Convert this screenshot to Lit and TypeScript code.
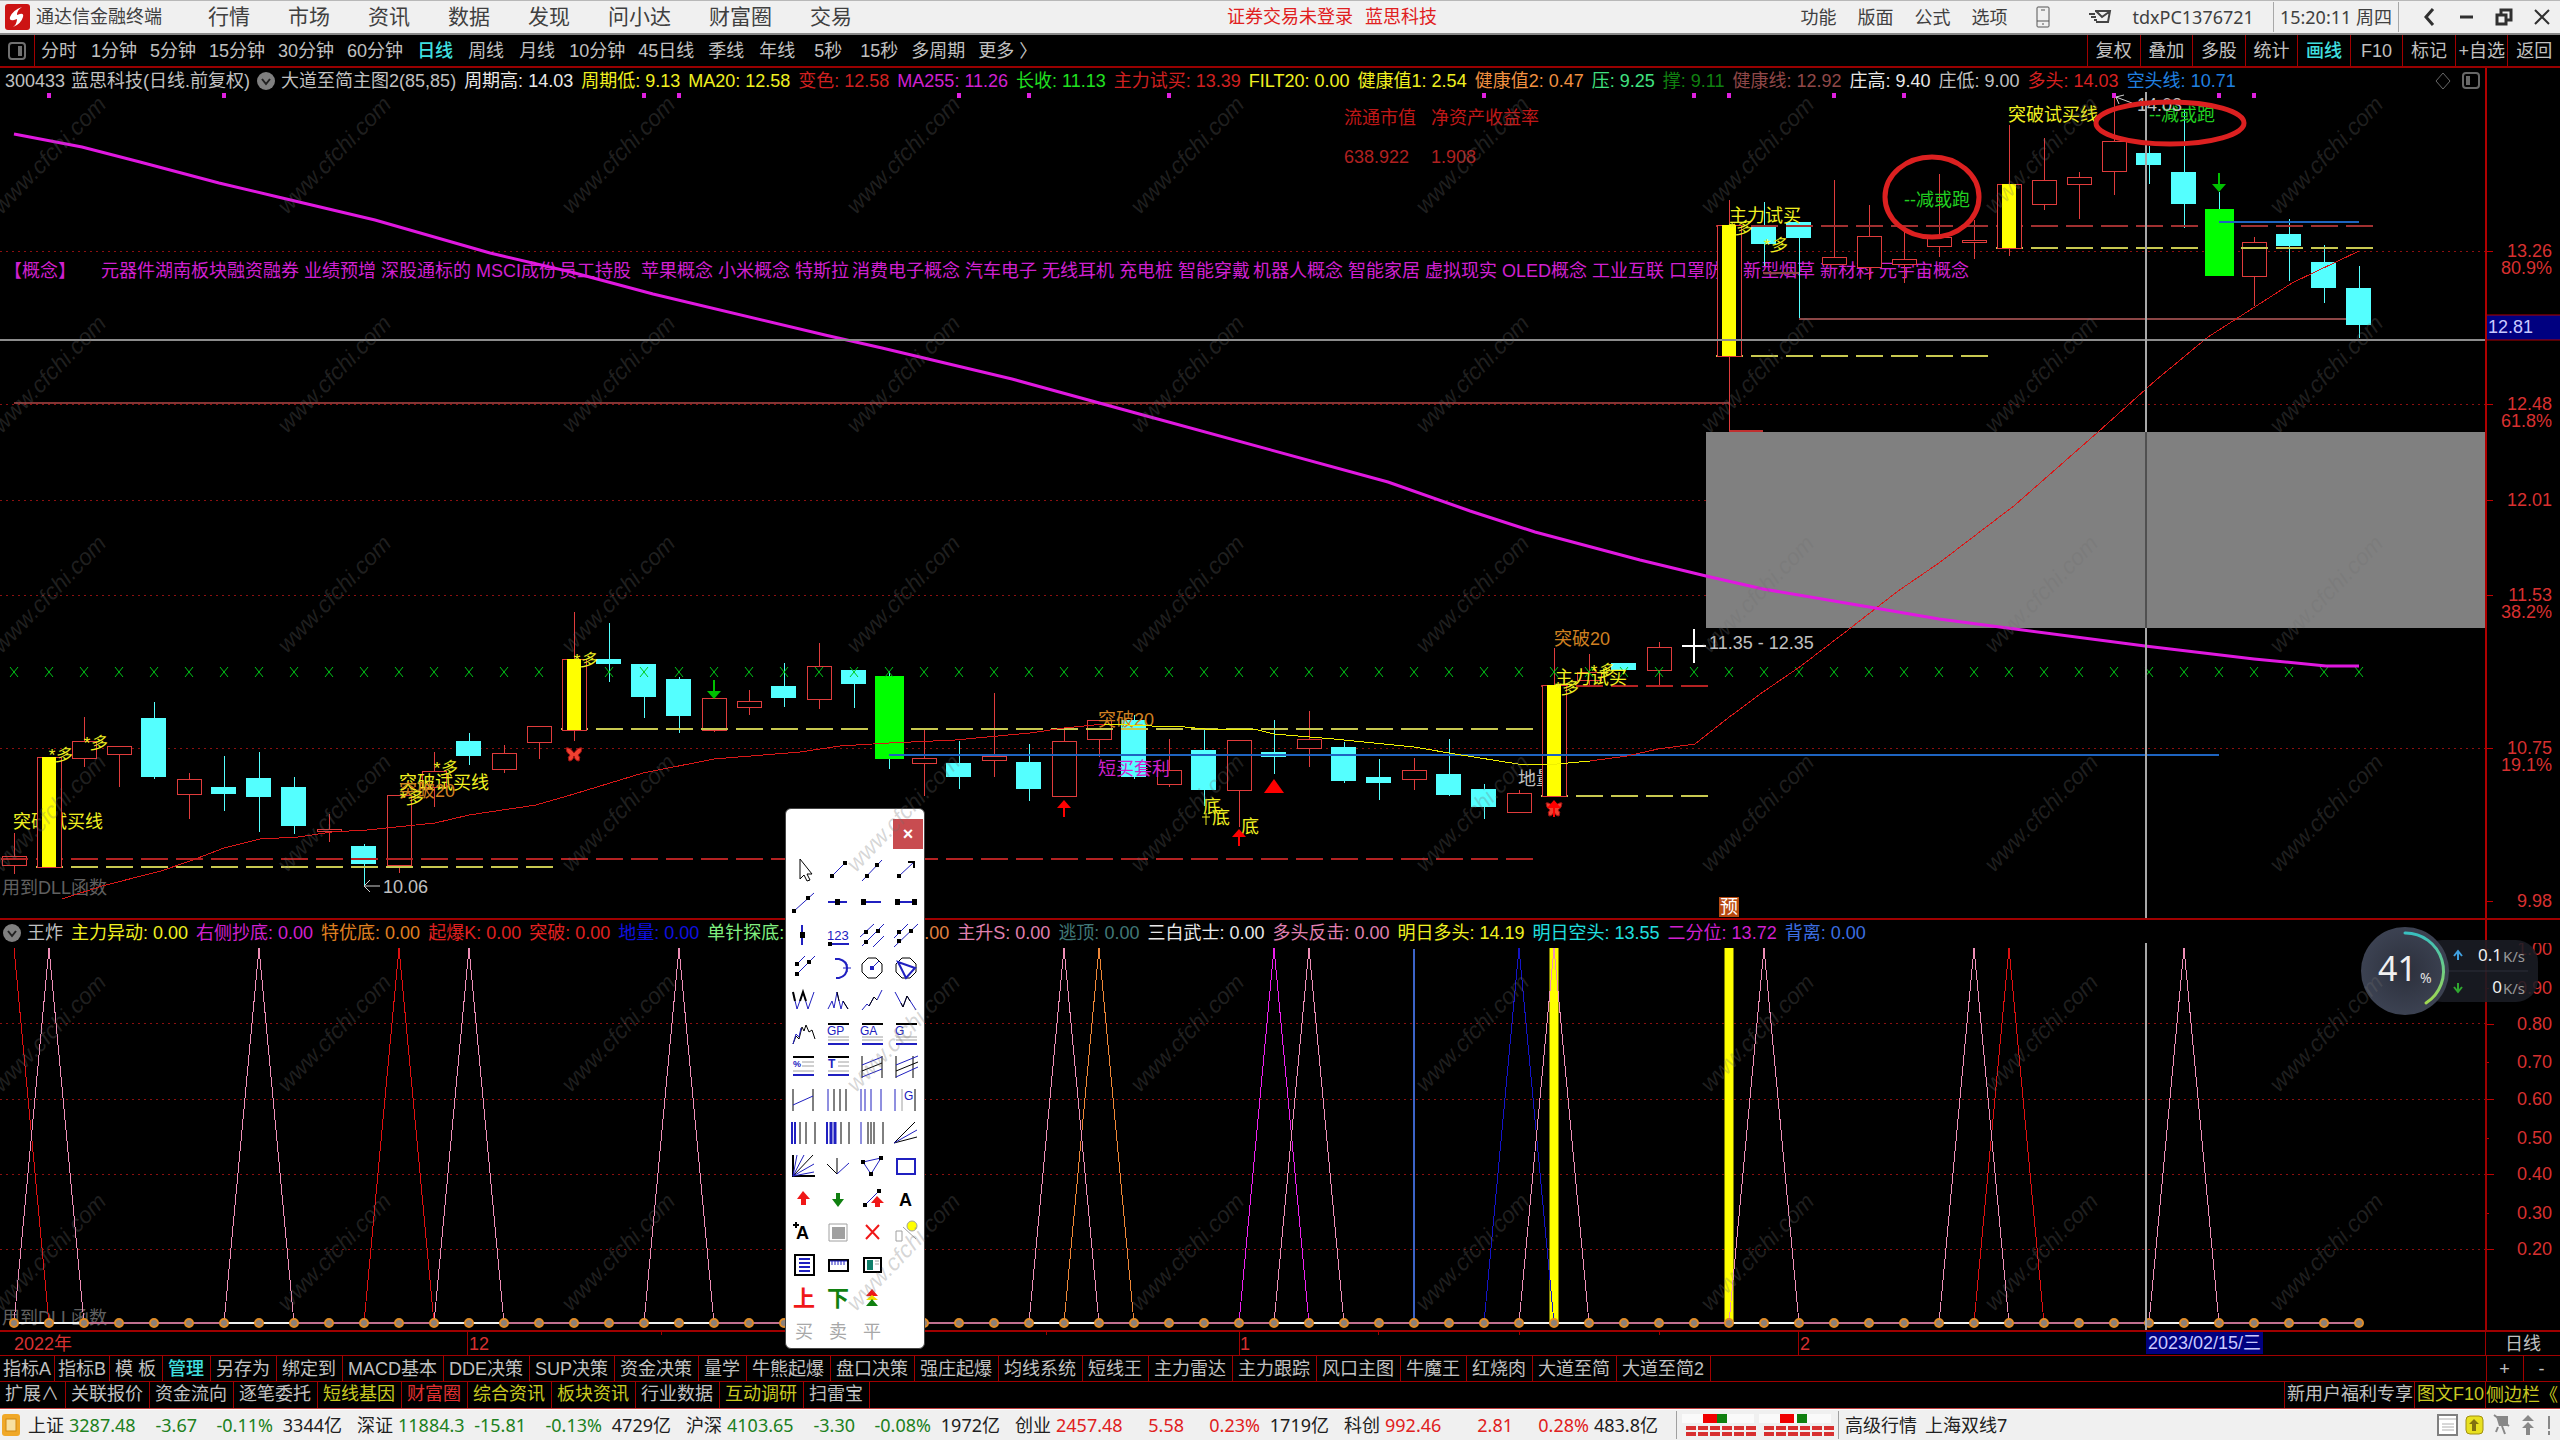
import { LitElement, html, svg, css } from "lit";
import { customElement, property } from "lit/decorators.js";

type Pt = [number, number];
type Item = { text: string; color: string };

const STEP = 35;
const bx = (i: number) => 14 + STEP * i;
const pts = (list: Pt[]) => list.map((p) => p.join(",")).join(" ");

/* index, kind (r hollow red, c cyan, y yellow, g green), high, top, bottom, low */
const CANDLES: [number, string, number, number, number, number][] = [
  [0, "r", 833, 856, 865, 874], [1, "y", 757, 757, 867, 867], [2, "r", 717, 741, 758, 767],
  [3, "r", 746, 746, 754, 787], [4, "c", 702, 718, 777, 779], [5, "r", 773, 779, 794, 819],
  [6, "c", 756, 787, 794, 811], [7, "c", 752, 778, 797, 832], [8, "c", 777, 787, 826, 834],
  [9, "r", 814, 829, 831, 842], [10, "c", 844, 846, 864, 885], [11, "r", 795, 795, 865, 873],
  [12, "r", 752, 771, 787, 807], [13, "c", 733, 741, 756, 765], [14, "r", 745, 753, 769, 773],
  [15, "r", 726, 726, 742, 759], [16, "y", 612, 659, 730, 741], [17, "c", 623, 659, 664, 682],
  [18, "c", 664, 664, 697, 718], [19, "c", 677, 679, 716, 733], [20, "r", 698, 698, 730, 732],
  [21, "r", 690, 701, 707, 715], [22, "c", 663, 686, 698, 707], [23, "r", 643, 666, 699, 709],
  [24, "c", 670, 670, 684, 708], [25, "g", 671, 676, 759, 769], [26, "r", 730, 758, 763, 796],
  [27, "c", 741, 763, 777, 789], [28, "r", 693, 756, 760, 777], [29, "c", 744, 762, 789, 801],
  [30, "r", 729, 741, 796, 796], [31, "r", 720, 720, 739, 757], [32, "c", 715, 720, 777, 779],
  [33, "r", 739, 770, 784, 787], [34, "c", 730, 750, 790, 806], [35, "r", 740, 740, 790, 827],
  [36, "c", 720, 752, 757, 774], [37, "r", 711, 739, 748, 767], [38, "c", 742, 747, 781, 783],
  [39, "c", 759, 777, 783, 800], [40, "r", 758, 770, 779, 790], [41, "c", 739, 774, 795, 796],
  [42, "c", 784, 789, 807, 819], [43, "r", 790, 793, 812, 812], [44, "y", 648, 685, 796, 796],
  [45, "r", 654, 672, 680, 686], [46, "c", 663, 663, 670, 673], [47, "r", 642, 647, 670, 686],
  [49, "y", 200, 225, 356, 431], [50, "c", 202, 226, 244, 266], [51, "c", 222, 222, 238, 318],
  [52, "r", 180, 257, 264, 264], [53, "r", 205, 236, 267, 280], [54, "r", 232, 259, 264, 283],
  [55, "r", 174, 237, 246, 257], [56, "r", 220, 240, 242, 259], [57, "y", 125, 184, 248, 256],
  [58, "r", 138, 180, 204, 210], [59, "r", 172, 177, 184, 219], [60, "r", 97, 141, 171, 195],
  [61, "c", 146, 153, 165, 184], [62, "c", 110, 172, 204, 228], [63, "g", 192, 209, 276, 276],
  [64, "r", 237, 242, 276, 306], [65, "c", 219, 234, 246, 281], [66, "c", 245, 262, 288, 303],
  [67, "c", 266, 288, 325, 338],
];

const MA_LONG: Pt[] = [
  [14, 134], [82, 147], [140, 162], [219, 183], [278, 197], [375, 220], [490, 253], [571, 272], [653, 294],
  [825, 335], [882, 348], [1012, 379], [1143, 415], [1388, 482], [1470, 511], [1535, 532], [1640, 560], [1706, 576], [1763, 589],
  [1875, 608], [1939, 619], [2015, 629], [2145, 646], [2254, 659], [2326, 666], [2359, 666],
];
const MA_RED_A: Pt[] = [
  [62, 899], [102, 886], [161, 871], [190, 861], [224, 848], [260, 839], [298, 837], [332, 832], [367, 830],
  [435, 823], [469, 815], [536, 805], [574, 794], [643, 773], [714, 759], [800, 752], [840, 746], [889, 743],
  [955, 740], [1030, 733], [1064, 728], [1104, 724],
];
const MA_YELLOW: Pt[] = [
  [1104, 724], [1152, 726], [1185, 727], [1205, 729], [1254, 729], [1274, 734], [1334, 739], [1414, 747],
  [1455, 754], [1518, 764], [1546, 765], [1590, 761],
];
const MA_RED_B: Pt[] = [
  [1590, 761], [1627, 756], [1658, 749], [1695, 744], [1728, 718], [1763, 692], [1801, 666], [1848, 630],
  [1898, 591], [1939, 563], [2015, 505], [2098, 432], [2156, 380], [2208, 337], [2292, 283], [2359, 251],
];

/* colour, y, first bar, last bar */
const STICKS: [string, number, number, number][] = [
  ["#c8c850", 867, 1, 15], ["#c8c850", 729, 16, 43], ["#c8c850", 796, 44, 48],
  ["#c8c850", 356, 49, 56], ["#c8c850", 248, 57, 67],
  ["#b42222", 859, 0, 43], ["#b42222", 686, 44, 48], ["#a03030", 226, 49, 67],
];

const PRICE_LABELS: [number, string, string?][] = [
  [251, "13.26", "80.9%"], [404, "12.48", "61.8%"], [500, "12.01"], [595, "11.53", "38.2%"],
  [748, "10.75", "19.1%"], [901, "9.98"],
];

const DOTS = [1, 6, 18, 19, 27, 29, 33, 42, 48, 49, 52, 54, 60, 63, 64];

const YEL = "#f0f020";
const NOTES: [number, number, string, string][] = [
  [13, 822, "突破试买线", YEL], [399, 783, "突破试买线", YEL], [399, 791, "突破20", "#d08020"],
  [1098, 720, "突破20", "#d08020"], [1554, 639, "突破20", "#d08020"], [1098, 769, "短买套利", "#d020d0"],
  [1203, 807, "底", YEL], [1212, 818, "底", YEL], [1241, 827, "底", YEL], [1518, 779, "地量", "#c0c0c0"],
];
const TOP_NOTES: [number, number, string, string][] = [
  [1555, 678, "主力试买", YEL], [1729, 216, "主力试买", YEL], [2008, 115, "突破试买线", YEL],
  [1904, 200, "--减或跑", "#20d020"], [2149, 115, "--减或跑", "#20d020"],
  [383, 887, "10.06", "#c0c0c0"], [1709, 643, "11.35 - 12.35", "#c0c0c0"],
  [1344, 118, "流通市值", "#c01818"], [1431, 118, "净资产收益率", "#c01818"],
  [1344, 157, "638.922", "#b02020"], [1431, 157, "1.908", "#b02020"],
];
const MANY: Pt[] = [[48, 755], [83, 743], [399, 798], [433, 768], [573, 660], [1554, 688], [1590, 671], [1728, 228], [1763, 245]];

const CONCEPTS: [number, string][] = [
  [4, "【概念】"],
  [101, "元器件湖南板块融资融券 业绩预增 深股通标的 MSCI成份"],
  [559, "员工持股"],
  [641, "苹果概念 小米概念 特斯拉"],
  [852, "消费电子概念 汽车电子 无线耳机 充电桩 智能穿戴"],
  [1253, "机器人概念 智能家居 虚拟现实"],
  [1502, "OLED概念 工业互联 口罩防护"],
  [1743, "新型烟草 新材料 元宇宙概念"],
];

@customElement("price-chart")
export class PriceChart extends LitElement {
  static styles = css`
    :host { display: block; }
    .plot { display: block; width: 100%; height: auto; font: 18px "Liberation Sans", "Noto Sans CJK SC", sans-serif; }
    .mid { dominant-baseline: central; }
    .many { font-size: 17px; font-style: italic; }
  `;

  private candle([i, kind, high, top, bottom, low]: (typeof CANDLES)[number]) {
    const x = bx(i);
    const cyan = kind === "c" || kind === "g";
    const line = cyan ? "#54ffff" : "#e03c3c";
    const wick = svg`<path d="M${x} ${high}V${top}M${x} ${bottom}V${low}" stroke=${line} stroke-width="1" />`;
    if (kind === "c") return svg`${wick}<rect x=${x - 13} y=${top} width="25" height=${bottom - top} fill="#54ffff" />`;
    if (kind === "g") return svg`${wick}<rect x=${x - 14} y=${top} width="29" height=${bottom - top} fill="#00ff00" />`;
    const box = svg`<rect x=${x - 12} y=${top} width="24" height=${bottom - top} fill="#000" stroke="#e03c3c" />`;
    if (kind === "r") return svg`${wick}${box}`;
    return svg`${wick}${box}<rect x=${x - 7} y=${top} width="14" height=${bottom - top} fill="#ff0" />`;
  }

  private upArrow(x: number, y: number) {
    return svg`<path d="M${x} ${y}l7 8h-6v9h-2v-9h-6z" fill="#f00" />`;
  }

  private downArrow(x: number, y: number) {
    return svg`<path d="M${x} ${y + 19}l7 -8h-6v-11h-2v11h-6z" fill="#00c000" />`;
  }

  private butterfly(x: number, y: number) {
    return svg`<path d="M${x} ${y}q-4 -6 -8 -5q0 5 4 7q-3 2 -1 6q4 0 5 -5q1 5 5 5q2 -4 -1 -6q4 -2 4 -7q-4 -1 -8 5z"
      fill="#f04030" stroke="#a01010" />`;
  }

  render() {
    const xs = Array.from({ length: 68 }, (_, i) => i).filter((i) => i !== 16);
    return html`<svg class="plot" viewBox="0 92 2560 826" role="img" aria-label="日线">
      <g shape-rendering="crispEdges">
        ${PRICE_LABELS.map(([y]) => svg`
          ${y < 900 ? svg`<line x1="0" y1=${y} x2="2485" y2=${y} stroke="#8c1010" stroke-dasharray="2 4" />` : ""}
          <line x1="2485" y1=${y} x2="2493" y2=${y} stroke="#c00000" />`)}
      </g>
      <text x="2" y="888" class="mid" fill="#606060">用到DLL函数</text>
      ${CONCEPTS.map(([x, t]) => svg`<text x=${x} y="271" class="mid" fill="#d020d0">${t}</text>`)}
      <g shape-rendering="crispEdges" fill="none">
        <path d="M14 403H1729" stroke="#843434" stroke-width="2" />
        <path d="M1763 273H1799M1799 319H2359" stroke="#8c4646" stroke-width="2" />
        <path d="M1729 431H1763" stroke="#c03030" stroke-width="2" />
      </g>
      <rect x="1706" y="432" width="779" height="196" fill="#808080" />
      <g shape-rendering="crispEdges">
        ${CANDLES.filter((c) => c[1] === "r" || c[1] === "c").map((c) => this.candle(c))}
      </g>
      ${NOTES.map(([x, y, t, c]) => svg`<text x=${x} y=${y} class="mid" fill=${c}>${t}</text>`)}
      <g shape-rendering="crispEdges">
        ${STICKS.map(([c, y, a, b]) => svg`<line x1=${bx(a) - 13} y1=${y} x2=${bx(b) + 14} y2=${y} stroke=${c} stroke-width="2" stroke-dasharray="27 8" />`)}
        ${CANDLES.filter((c) => c[1] === "y" || c[1] === "g").map((c) => this.candle(c))}
      </g>
      <path d="M889 755H2219M2219 222H2359" stroke="#1e64c0" stroke-width="2" />
      <g stroke="#00c818">
        ${xs.map((i) => svg`<path d="M${bx(i) - 4} 667l8 10m0 -10l-8 10" />`)}
      </g>
      <g fill="none">
        <g shape-rendering="crispEdges">
          <polyline points=${pts(MA_RED_A)} stroke="#d81818" />
          <polyline points=${pts(MA_YELLOW)} stroke="#f0f000" />
          <polyline points=${pts(MA_RED_B)} stroke="#d81818" />
        </g>
        <polyline points=${pts(MA_LONG)} stroke="#e018e0" stroke-width="3" />
      </g>
      ${DOTS.map((i) => svg`<rect x=${bx(i) - 2} y="93" width="4" height="5" fill="#e020e0" />`)}
      ${MANY.map(([x, y]) => svg`<text x=${x} y=${y} class="mid many" fill=${YEL}>*多</text>`)}
      ${TOP_NOTES.map(([x, y, t, c]) => svg`<text x=${x} y=${y} class="mid" fill=${c}>${t}</text>`)}
      <text x="2137" y="105" class="mid" fill="#c0c0c0">14.03</text>
      <path d="M364 886h16m-16 0l6 -6m-6 6l6 6M2116 97l16 6m-16 -6l8 -2m-8 2l3 7" stroke="#d0d0d0" fill="none" />
      ${this.butterfly(574, 753)}${this.butterfly(1554, 808)}
      ${this.upArrow(1064, 800)}${this.upArrow(1239, 829)}${this.upArrow(1554, 800)}
      <path d="M1274 779l10 14h-20z" fill="#f00" />
      ${this.downArrow(714, 680)}${this.downArrow(2219, 173)}
      <path d="M1206 813v12m-4 -8h8" stroke=${YEL} />
      <path d="M1682 646h24M1694 629v34" stroke="#fff" stroke-width="2" shape-rendering="crispEdges" />
      <rect x="1719" y="897" width="20" height="20" fill="#b84a10" />
      <text x="1720" y="907" class="mid" fill="#fff">预</text>
      <g shape-rendering="crispEdges">
        <rect x="0" y="339" width="2485" height="2" fill="#8c8c8c" />
        <path d="M2146 92V432M2146 628V918" stroke="#a8a8a8" stroke-width="2" />
        <path d="M2146 432V628" stroke="#505050" stroke-width="2" />
        <path d="M2486 92V918" stroke="#b00000" stroke-width="2" />
      </g>
      <ellipse cx="1932" cy="197" rx="47" ry="40" fill="none" stroke="#dc2020" stroke-width="5" />
      <ellipse cx="2170" cy="123" rx="74" ry="21" fill="none" stroke="#dc2020" stroke-width="5" />
      <g text-anchor="end" fill="#d83030">
        ${PRICE_LABELS.map(([y, p, pc]) => svg`
          <text x="2552" y=${y} class="mid">${p}</text>
          ${pc ? svg`<text x="2552" y=${y + 17} class="mid">${pc}</text>` : ""}`)}
      </g>
      <rect x="2487" y="315" width="73" height="25" fill="#000080" />
      <path d="M2487 315h73M2487 340h73" stroke="#b00000" />
      <text x="2488" y="327" class="mid" fill="#c8c8ff">12.81</text>
    </svg>`;
  }
}

const PINK = "#f090b8";
const PEAKS: [number, string][] = [
  [11, "#e01010"], [43, "#1414c8"], [31, "#f08838"], [36, "#f020f0"], [57, "#e01010"],
  [1, PINK], [7, PINK], [13, PINK], [19, PINK], [30, PINK], [37, PINK], [44, PINK], [50, PINK], [56, PINK], [62, PINK],
];

@customElement("signal-chart")
export class SignalChart extends LitElement {
  static styles = css`
    :host { display: block; }
    .plot { display: block; width: 100%; height: auto; font: 18px "Liberation Sans", "Noto Sans CJK SC", sans-serif; }
    .mid { dominant-baseline: central; }
  `;

  render() {
    const levels: [number, string][] = [
      [949, "1.00"], [988, "0.90"], [1024, "0.80"], [1062, "0.70"], [1099, "0.60"],
      [1138, "0.50"], [1174, "0.40"], [1213, "0.30"], [1249, "0.20"],
    ];
    const grid = [1023, 1099, 1174, 1249];
    const all = Array.from({ length: 68 }, (_, i) => i);
    return html`<svg class="plot" viewBox="0 943 2560 412" role="img" aria-label="王炸">
      <g shape-rendering="crispEdges">
        ${grid.map((y) => svg`<line x1="0" y1=${y} x2="2485" y2=${y} stroke="#8c1010" stroke-dasharray="2 4" />`)}
        ${levels.map(([y]) => svg`<line x1="2486" y1=${y} x2=${grid.some((g) => Math.abs(g - y) < 2) ? 2494 : 2489} y2=${y} stroke="#c00000" />`)}
      </g>
      <text x="2" y="1318" class="mid" fill="#606060">用到DLL函数</text>
      <path d="M1414 949V1323" stroke="#3c64c8" stroke-width="2" />
      <path d="M1554 948V1323M1729 948V1323" stroke="#ff0" stroke-width="9" />
      <g fill="none" shape-rendering="crispEdges">
        <polyline points="14,948 49,1323" stroke="#e01010" />
        ${PEAKS.map(([i, c]) => svg`<polyline points=${pts([[bx(i - 1), 1323], [bx(i), 948], [bx(i + 1), 1323]])} stroke=${c} />`)}
      </g>
      <g shape-rendering="crispEdges">
        <line x1="14" y1="1323" x2="2359" y2="1323" stroke="#c07090" stroke-width="2" />
        ${PEAKS.filter((p) => p[1] === PINK).map(([i]) => svg`<line x1=${bx(i - 1)} y1="1323" x2=${bx(i + 1)} y2="1323" stroke="#f0f0f0" stroke-width="2" />`)}
      </g>
      ${all.map((i) => svg`<circle cx=${bx(i)} cy="1323" r="4" fill="#8c8078" stroke="#e08c28" stroke-width="2" />`)}
      <g shape-rendering="crispEdges" stroke="#a00000">
        <path d="M2146 943V1331" stroke="#a8a8a8" stroke-width="2" />
        <path d="M2486 943V1331M0 1331H2560" stroke-width="2" />
        <path d="M2485 1331V1355M467 1331V1355M1239 1331V1355M1798 1331V1355M661 1331v4M1046 1331v4M1378 1331v4M1519 1331v4M1659 1331v4" />
      </g>
      <rect x="2146" y="1332" width="117" height="22" fill="#000080" />
      <g fill="#d83030">
        <text x="14" y="1344" class="mid">2022年</text>
        <text x="469" y="1344" class="mid">12</text>
        <text x="1240" y="1344" class="mid">1</text>
        <text x="1800" y="1344" class="mid">2</text>
        <g text-anchor="end">${levels.map(([y, t]) => svg`<text x="2552" y=${y} class="mid">${t}</text>`)}</g>
      </g>
      <text x="2148" y="1343" class="mid" fill="#c8c8ff">2023/02/15/三</text>
      <text x="2505" y="1344" class="mid" fill="#c0c0c0">日线</text>
    </svg>`;
  }
}

const K = "#000";
const B = "#2020c0";
const G = "#a0a0a0";
const ln = (d: string, c = B, w = 1) => svg`<path d=${d} stroke=${c} stroke-width=${w} fill="none" />`;
const sq = (...list: Pt[]) => list.map(([x, y]) => svg`<rect x=${x - 2} y=${y - 2} width="4" height="4" fill="#000" />`);
const tx = (t: string, x: number, y: number, size: number, c: string, bold = false) =>
  svg`<text x=${x} y=${y} font-size=${size} font-weight=${bold ? 700 : 400} fill=${c}>${t}</text>`;
const OCT = "M8 2h8l6 6v8l-6 6h-8l-6 -6v-8z";
const lines = (t: string, x: number) =>
  svg`${ln("M2 2H23", K, 2)}${tx(t, x, 13, 12, B)}${ln("M2 15H23M2 18H23", G)}${ln("M2 22H23", B, 2)}`;

const TOOLS = [
  ["选择", svg`<path d="M8 2V22l4 -4l3 6l3 -1l-3 -6h5z" fill="#fff" stroke="#000" stroke-width="1" />`],
  ["线段", svg`${ln("M6 19L19 6")}${sq([6, 19], [19, 6])}`],
  ["直线", svg`${ln("M2 24L22 3")}${sq([7, 19], [17, 8])}`],
  ["箭头", svg`${ln("M5 19L20 5")}${ln("M14 5h6v6", K, 2)}${sq([5, 19])}`],
  ["射线", svg`${ln("M2 21L22 3")}${sq([2, 21], [16, 8])}`],
  ["水平线", svg`${ln("M2 12H21", B, 2)}<rect x="9" y="9" width="5" height="6" />`],
  ["水平射线", svg`${ln("M3 12H21", B, 2)}<rect x="1" y="9" width="5" height="6" />`],
  ["水平线段", svg`${ln("M3 12H20", B, 2)}<rect x="1" y="9" width="5" height="6" /><rect x="18" y="9" width="5" height="6" />`],
  ["垂直线", svg`${ln("M10 2V22", B, 2)}<rect x="8" y="9" width="5" height="6" />`],
  ["价格标注", svg`${tx("123", 1, 17, 13, B)}${ln("M4 21H23", B, 2)}${sq([4, 21])}`],
  ["平行线", svg`${ln("M0 14L14 1M2 23L24 1M13 24L24 13")}${sq([6, 9], [18, 8], [6, 19])}`],
  ["平行射线", svg`${ln("M0 15L14 1M0 24L24 1")}${sq([5, 9], [17, 8], [5, 18])}`],
  ["平行线段", svg`${ln("M5 8L13 0M5 18L23 0")}${sq([5, 8], [5, 18], [17, 6])}`],
  ["圆弧", svg`${ln("M9 3h4q8 2 8 9q0 8 -8 10h-3", B, 2)}${ln("M17 12h8M21 8v8", B)}`],
  ["圆", svg`${ln(OCT, K, 1)}${ln("M12 12L19 5")}<rect x="10" y="10" width="4" height="4" fill=${B} />`],
  ["外接圆", svg`${ln(OCT, K, 1)}${ln("M4 6L21 12L12 22z", B, 2)}`],
  ["W形", svg`${ln("M1 3L5 20L11 3L16 20L22 3")}${ln("M1 3L3 12M8 12L11 3L14 12", K, 2)}`],
  ["头肩", svg`${ln("M2 20L6 12L8 19L11 3L15 20L17 12L22 20")}${ln("M11 3L13 12M17 12L22 20", K)}`],
  ["上升浪", svg`${ln("M2 21L7 15L9 17L14 8L17 11L22 1")}${ln("M9 17L14 8L17 11", K)}`],
  ["下降浪", svg`${ln("M1 3L9 18L13 7L22 21")}${ln("M7 14L9 18L13 7L16 12", K)}`],
  ["波浪", svg`${ln("M1 22L4 14L7 17L10 5L12 9L14 3L17 10L20 8L23 17", K)}${ln("M1 22L4 12L7 15L9 6", B)}`],
  ["百分比线", lines("GP", 1)],
  ["黄金价位", lines("GA", 0)],
  ["黄金目标", lines("G", 1)],
  ["波段线", svg`${ln("M1 2H22", K, 2)}${tx("%", 1, 12, 9, B, true)}${ln("M10 7H22M10 11H22M1 16H22", G)}${ln("M1 20H22", B, 2)}`],
  ["对数线", svg`${ln("M2 2H23", K, 2)}${tx("T", 2, 13, 12, B, true)}${ln("M12 7H23M12 11H23M2 16H23", G)}${ln("M2 20H23", B, 2)}`],
  ["回归带", svg`${ln("M2 1V23M22 1V23", K)}${ln("M2 10L22 2M2 22L22 14")}${ln("M2 16L22 8", K)}`],
  ["延长回归带", svg`${ln("M2 1V23M19 1V23", K)}${ln("M2 10L24 1M2 22L24 12")}${ln("M2 16L24 7", K)}`],
  ["回归线", svg`${ln("M1 1V23M21 1V23", K)}${ln("M1 17L21 8")}`],
  ["周期线", svg`${ln("M2 1V23")}${ln("M8 1V23M14 1V23M20 1V23", K)}`],
  ["费氏周期", svg`${ln("M1 1V23M5 1V23M11 1V23M21 1V23", B)}`],
  ["黄金周期", svg`${ln("M1 1V23")}${ln("M8 1V23", G)}${tx("G", 10, 12, 12, B)}${ln("M21 1V23", K)}`],
  ["阳历线", svg`${ln("M0 1V23M3 1V23", B, 2)}${ln("M8 1V23M14 1V23M23 1V23", K)}`],
  ["阴历线", svg`${ln("M1 1V23", B, 2)}${ln("M5 1V23M9 1V23", B, 3)}${ln("M15 1V23M23 1V23", K)}`],
  ["循环线", svg`${ln("M1 1V23")}${ln("M8 1V23M11 1V23M14 1V23M23 1V23", K)}`],
  ["阻速线", svg`${ln("M0 22L21 1M0 22L23 16", K)}${ln("M0 22L23 9")}`],
  ["甘氏线", svg`${ln("M1 1V22H23", K, 2)}${ln("M1 22L21 1", K)}${ln("M1 22L5 1M1 22L12 1M1 22L22 10M1 22L22 18")}`],
  ["分叉线", svg`${ln("M11 4V20M1 10L11 20", K)}${ln("M11 20L23 9")}`],
  ["三角形", svg`${ln("M3 8L21 4L11 20z")}${sq([3, 8], [21, 4], [11, 20])}`],
  ["矩形", svg`${ln("M3 5H21V20H3z", B, 2)}`],
  ["上箭头", svg`<path d="M11 4l7 8h-4v6h-5v-6h-4z" fill="#f01818" />`],
  ["下箭头", svg`<path d="M12 20l6 -8h-4v-6h-4v6h-4z" fill="#108010" />`],
  ["涨跌箭头", svg`${ln("M5 18L20 3")}${sq([5, 18], [19, 4])}<path d="M17 9l7 7h-4v4h-5v-4h-4z" fill="#f01818" />`],
  ["文字", tx("A", 5, 19, 18, K, true)],
  ["注释", svg`${tx("A", 4, 19, 18, K, true)}${ln("M1 5h6M4 2v6", K, 2)}`],
  ["背景", svg`${ln("M3 4H21V21H3z", G)}<rect x="6" y="7" width="13" height="12" fill=${G} />`],
  ["删除", ln("M6 5L19 19M19 5L6 19", "#f01818", 2)],
  ["隐藏", svg`${ln("M2 11h6v10h-6zM9 7L22 19", G)}<circle cx="18" cy="6" r="5" fill="#ff0" stroke=${G} />`],
  ["画线管理", svg`${ln("M3 2H22V22H3z", K, 2)}${ln("M7 6H18M7 10H18M7 14H18M7 18H18", B, 2)}`],
  ["标尺", svg`${ln("M3 7H22V18H3z", K, 2)}${ln("M4 8H21M6 8v4M9 8v4M12 8v4M15 8v4M18 8v4", B, 1)}`],
  ["图片", svg`${ln("M4 5H21V19H4z", K, 2)}<rect x="7" y="7" width="6" height="10" fill="#10806a" />${ln("M15 8h4M15 11h4", G)}`],
  null,
  ["上", tx("上", 1, 20, 22, "#f01818", true)],
  ["下", tx("下", 1, 20, 22, "#108010", true)],
  ["多空", svg`<path d="M12 3l6 7h-12z" fill="#f01818" /><path d="M12 9l6 5h-12z" fill="#f0e000" /><path d="M12 13l6 7h-12z" fill="#108010" />`],
  null,
  ["买", tx("买", 3, 19, 18, "#a8a8a8")],
  ["卖", tx("卖", 3, 19, 18, "#a8a8a8")],
  ["平", tx("平", 3, 19, 18, "#a8a8a8")],
] as ([string, unknown] | null)[];

@customElement("draw-palette")
export class DrawPalette extends LitElement {
  static styles = css`
    :host { display: block; }
    .panel { background: #fff; border: 1px solid #444; border-radius: 6px; padding: 10px 1px 1px; }
    .top { display: flex; justify-content: flex-end; }
    .close { width: 30px; height: 30px; border: 0; background: #c84c50; color: #fff; font: 700 18px "Liberation Sans", sans-serif; line-height: 26px; padding: 0; }
    .tools { display: grid; grid-template-columns: repeat(4, 1fr); grid-auto-rows: 33px; padding-top: 3px; }
    .tool { border: 0; background: none; padding: 0; display: grid; place-items: center; }
    .glyph { width: 24px; height: 24px; overflow: visible; font-family: "Liberation Sans", "Noto Sans CJK SC", sans-serif; }
  `;
  render() {
    return html`<div class="panel">
      <div class="top"><button class="close" aria-label="关闭">×</button></div>
      <div class="tools">
        ${TOOLS.map((t) => t
          ? html`<button class="tool" aria-label=${t[0]}><svg class="glyph" viewBox="0 0 24 24">${t[1]}</svg></button>`
          : html`<span></span>`)}
      </div>
    </div>`;
  }
}

@customElement("chart-legend")
export class ChartLegend extends LitElement {
  @property({ attribute: false }) items: Item[] = [];
  static styles = css`
    :host { display: flex; align-items: center; gap: 8px; white-space: nowrap; }
    .blank { min-width: 117px; text-align: right; }
  `;
  render() {
    return this.items.map((it) => html`<span class=${it.text === "0.00" ? "blank" : "entry"} style="color:${it.color}">${it.text}</span>`);
  }
}

const MENU = ["行情", "市场", "资讯", "数据", "发现", "问小达", "财富圈", "交易"];
const PERIODS = ["分时", "1分钟", "5分钟", "15分钟", "30分钟", "60分钟", "日线", "周线", "月线", "10分钟", "45日线", "季线", "年线", "5秒", "15秒", "多周期", "更多 〉"];
const ACTIONS = ["复权", "叠加", "多股", "统计", "画线", "F10", "标记", "+自选", "返回"];
const W = "#e8e8e8";
const LEGEND_A: Item[] = [
  ["周期高: 14.03", W], ["周期低: 9.13", "#f0f020"], ["MA20: 12.58", "#f0f020"], ["变色: 12.58", "#d02020"],
  ["MA255: 11.26", "#d020d0"], ["长收: 11.13", "#20e020"], ["主力试买: 13.39", "#d02020"], ["FILT20: 0.00", "#f0f020"],
  ["健康值1: 2.54", "#f0f020"], ["健康值2: 0.47", "#f09040"], ["压: 9.25", "#40e080"], ["撑: 9.11", "#108010"],
  ["健康线: 12.92", "#904848"], ["庄高: 9.40", W], ["庄低: 9.00", "#c0c0c0"], ["多头: 14.03", "#d82020"], ["空头线: 10.71", "#2080e0"],
].map(([text, color]) => ({ text, color }));
const LEGEND_B: Item[] = [
  ["主力异动: 0.00", "#f0f020"], ["右侧抄底: 0.00", "#d020d0"], ["特优底: 0.00", "#e08020"], ["起爆K: 0.00", "#e02020"],
  ["突破: 0.00", "#e02020"], ["地量: 0.00", "#1010e0"], ["单针探底: 0.00", "#80f080"], ["0.00", "#e08040"],
  ["主升S: 0.00", "#e080b0"], ["逃顶: 0.00", "#407878"], ["三白武士: 0.00", W], ["多头反击: 0.00", "#e080b0"],
  ["明日多头: 14.19", "#f0f020"], ["明日空头: 13.55", "#20e0e0"], ["二分位: 13.72", "#d020d0"], ["背离: 0.00", "#3c6ee0"],
].map(([text, color]) => ({ text, color }));
const TABS = ["指标A", "指标B", "模 板", "管理", "另存为", "绑定到", "MACD基本", "DDE决策", "SUP决策", "资金决策", "量学", "牛熊起爆", "盘口决策", "强庄起爆", "均线系统", "短线王", "主力雷达", "主力跟踪", "风口主图", "牛魔王", "红烧肉", "大道至简", "大道至简2"];
const LINKS: [string, string][] = [
  ["扩展∧", ""], ["关联报价", ""], ["资金流向", ""], ["逐笔委托", ""], ["短线基因", "gold"], ["财富圈", "hot"],
  ["综合资讯", "gold"], ["板块资讯", "gold"], ["行业数据", ""], ["互动调研", "gold"], ["扫雷宝", ""],
];
const QUOTES = [
  ["上证", "3287.48", "-3.67", "-0.11%", "3344亿", "down"],
  ["深证", "11884.3", "-15.81", "-0.13%", "4729亿", "down"],
  ["沪深", "4103.65", "-3.30", "-0.08%", "1972亿", "down"],
  ["创业", "2457.48", "5.58", "0.23%", "1719亿", "up"],
  ["科创", "992.46", "2.81", "0.28%", "483.8亿", "up"],
];

@customElement("app-root")
export class AppRoot extends LitElement {
  static styles = css`
    :host { display: block; }
    .app { position: relative; min-height: 100vh; overflow: hidden; display: flex; flex-direction: column; background: #000; color: #c0c0c0; font: 18px "Liberation Sans", "Noto Sans CJK SC", sans-serif; line-height: 24px; white-space: nowrap; }
    button, a { font: inherit; color: inherit; background: none; border: 0; padding: 0; margin: 0; text-decoration: none; white-space: nowrap; }
    .ui { font-family: "Noto Sans", "Noto Sans CJK SC", sans-serif; }

    .title { height: 35px; box-sizing: border-box; background: #f0f0f0; color: #404040; border-top: 1px solid #b8b8b8; border-bottom: 2px solid #888; display: grid; grid-template-columns: 1fr auto 1fr; align-items: center; }
    .brand { display: flex; align-items: center; gap: 6px; padding-left: 5px; }
    .logo { width: 25px; height: 26px; }
    .menu { display: flex; gap: 38px; padding-left: 40px; font-size: 21px; }
    .alert { display: flex; gap: 12px; color: #e02020; padding-left: 104px; }
    .right { display: flex; align-items: center; justify-content: flex-end; height: 100%; }
    .funcs { display: flex; align-items: center; gap: 21px; }
    .phone { width: 14px; height: 22px; margin-left: 8px; }
    .mail { width: 24px; height: 18px; margin: 0 20px 0 38px; }
    .cell { height: 30px; display: flex; align-items: center; border-right: 1px solid #a8a8a8; }
    .user { padding-right: 19px; }
    .clock { padding: 0 6px; }
    .win { display: flex; align-items: center; gap: 20px; padding: 0 9px 0 20px; }
    .winicon { display: block; width: 18px; height: 18px; }

    .toolbar { height: 33px; box-sizing: border-box; border-bottom: 2px solid #900; display: flex; align-items: stretch; }
    .toggle { width: 35px; border-right: 1px solid #a00000; display: grid; place-items: center; }
    .toggle svg { width: 18px; height: 18px; }
    .periods { display: flex; flex: 1; margin-left: -1px; }
    .period { padding: 0 7px 0 6px; min-width: 51px; }
    .on { color: #40e0e0; font-weight: 500; }
    .actions { display: grid; grid-template-columns: repeat(9, 1fr); width: 473px; }
    .action { border-left: 1px solid #a00000; }

    .legend { display: flex; align-items: center; box-sizing: border-box; }
    .main-legend { height: 24px; padding: 2px 0 0 5px; }
    .sub-legend { height: 25px; padding: 2px 0 0 2px; border-top: 2px solid #a00000; }
    .code { margin-right: 6px; }
    .chev { width: 20px; height: 22px; flex: none; margin: 0 5px 0 6px; }
    .first { margin-left: 0; }
    .name { margin-right: 8px; }
    .corner { margin-left: auto; display: flex; align-items: center; align-self: stretch; gap: 10px; }
    .corner svg { width: 18px; height: 18px; }
    .axis-head { width: 73px; align-self: stretch; border-left: 2px solid #b00000; margin-top: -2px; }
    .icons + .axis-head { margin-left: -5px; }
    .icons { display: flex; gap: 10px; }

    .row { display: flex; align-items: stretch; border-top: 1px solid #a00000; }
    .tabs { height: 25px; }
    .links { height: 26px; border-bottom: 1px solid #c04040; }
    .tab { padding: 0 6px 0 5px; border-right: 1px solid #a00000; }
    .tight { padding: 0 3px; }
    .push { margin-left: auto; display: flex; }
    .push .tab { border-right: 0; border-left: 1px solid #a00000; }
    .push .pm { width: 37px; }
    .push .wide { padding: 0 1px 0 2px; }
    .push .side { width: 75px; padding: 0; text-align: left; }
    .gold { color: #c8c820; }
    .hot { color: #e03030; }

    .status { flex: 1; min-height: 31px; background: #f0f0f0; color: #202020; display: flex; align-items: center; border-top: 1px solid #fff; box-sizing: border-box; }
    .box { width: 22px; height: 24px; margin-right: 6px; }
    .quotes { display: flex; margin: 0; padding: 0; list-style: none; }
    .quote { display: grid; grid-template-columns: 41px 67px 61px 76px 69px; padding-right: 15px; }
    .num { text-align: right; }
    .down { color: #208020; }
    .up { color: #e02020; }
    .meter { height: 28px; padding: 0 4px 0 5px; margin-left: 3px; border-left: 1px solid #a0a0a0; border-right: 1px solid #a0a0a0; }
    .meter svg { width: 152px; height: 28px; display: block; }
    .feed { display: flex; gap: 8px; padding-left: 6px; }
    .tray { margin-left: auto; }
    .tray svg { display: block; width: 128px; height: 26px; }

    .float { position: absolute; left: 785px; top: 808px; width: 140px; }
    .gadget { position: absolute; left: 2360px; top: 926px; width: 180px; height: 90px; }
    .marks { position: absolute; left: 0; top: 0; width: 2560px; height: 1355px; pointer-events: none; font: italic 23px "Liberation Sans", sans-serif; }
  `;

  private chevron(extra = "") {
    return html`<svg class="chev ${extra}" viewBox="0 0 20 22"><circle cx="10" cy="11" r="9" fill="#808080" /><path d="M6 9l4 5l4 -5" fill="none" stroke="#202020" stroke-width="2" /></svg>`;
  }

  private titleBar() {
    return html`<header class="title">
      <div class="brand">
        <svg class="logo" viewBox="0 0 25 26"><rect width="25" height="26" rx="3" fill="#cc1414" /><path d="M17 3Q8 6 5 13Q4 17 9 16L12 15Q12 20 8 23Q16 20 18 13Q19 9 15 10L12 11Q12 6 17 3z" fill="#fff" /></svg>
        <span>通达信金融终端</span>
        <nav class="menu">${MENU.map((m) => html`<button>${m}</button>`)}</nav>
      </div>
      <div class="alert"><span>证券交易未登录</span><span>蓝思科技</span></div>
      <div class="right ui">
        <div class="funcs">
          ${["功能", "版面", "公式", "选项"].map((m) => html`<button>${m}</button>`)}
          <svg class="phone" viewBox="0 0 14 22"><rect x="1" y="1" width="12" height="20" rx="1" fill="none" stroke="#555" stroke-width="1" /><path d="M1 15h12M5 4h4M6 18h2" stroke="#555" /></svg>
        </div>
        <svg class="mail" viewBox="0 0 24 18"><path d="M7 3h15l-2 11H8M8 3l6 6l7 -5M1 6h6M3 9h5M6 12h3" fill="none" stroke="#444" stroke-width="2" /></svg>
        <div class="cell user">tdxPC1376721</div>
        <div class="cell clock">15:20:11 周四</div>
        <div class="win">
          <button aria-label="收起"><svg class="winicon" viewBox="0 0 18 18"><path d="M14 1L7 9l7 8" fill="none" stroke="#303030" stroke-width="3" /></svg></button>
          <button aria-label="最小化"><svg class="winicon" viewBox="0 0 18 18"><path d="M3 9h13" stroke="#303030" stroke-width="3" /></svg></button>
          <button aria-label="还原"><svg class="winicon" viewBox="0 0 18 18"><path d="M2 7h9v9h-9zM6 7v-5h10v10h-5" fill="none" stroke="#303030" stroke-width="3" /></svg></button>
          <button aria-label="关闭"><svg class="winicon" viewBox="0 0 18 18"><path d="M2 2l14 14M16 2L2 16" stroke="#303030" stroke-width="2" /></svg></button>
        </div>
      </div>
    </header>`;
  }

  private tray() {
    return html`<div class="tray"><svg viewBox="0 0 128 26" aria-hidden="true">
      <rect x="6" y="3" width="19" height="20" fill="#fff" stroke="#808080" stroke-width="2" /><path d="M7 7h17M10 12h12M10 15h12M10 18h12" stroke="#b0b0b0" />
      <rect x="34" y="4" width="17" height="18" rx="4" fill="#e8e020" stroke="#a09010" /><path d="M42 7l5 5h-3v7h-4v-7h-3z" fill="#807010" />
      <path d="M64 4h12v10h-9z" fill="#888" /><path d="M62 3l15 11M70 14l3 8M66 15l-2 5" stroke="#888" stroke-width="2" />
      <path d="M96 3l6 6h-12zM96 10l6 6h-12zM94 14h4v9h-4z" fill="#888" /><path d="M117 4v13M117 19v4" stroke="#888" stroke-width="2" />
    </svg></div>`;
  }

  private gadget() {
    return html`<svg class="gadget" viewBox="0 0 180 90" font-family="Noto Sans, sans-serif">
      <defs>
        <linearGradient id="arc" x1="0" y1="0" x2="0" y2="1"><stop offset="0" stop-color="#38c0c0" /><stop offset="1" stop-color="#a0d850" /></linearGradient>
        <radialGradient id="disc"><stop offset="0" stop-color="#2c303c" /><stop offset="1" stop-color="#3c4252" /></radialGradient>
      </defs>
      <rect x="60" y="14" width="118" height="62" rx="22" fill="#1a1c24" fill-opacity="0.88" />
      <path d="M88 45H168" stroke="#2c2e38" />
      <circle cx="45" cy="45" r="44" fill="url(#disc)" />
      <path d="M45 7A38 38 0 0 1 66 77" fill="none" stroke="url(#arc)" stroke-width="3" stroke-linecap="round" />
      <text x="18" y="55" font-size="34" fill="#f0f0f0">41</text>
      <text x="60" y="57" font-size="14" fill="#e0e0e0">%</text>
      <path d="M98 34v-8m-4 4l4 -5l4 5" fill="none" stroke="#40a0e0" stroke-width="2" />
      <path d="M98 57v8m-4 -4l4 5l4 -5" fill="none" stroke="#30a830" stroke-width="2" />
      <g font-size="17" fill="#f0f0f0" text-anchor="end"><text x="142" y="35">0.1</text><text x="142" y="67">0</text></g>
      <g font-size="15" fill="#989898"><text x="143" y="36">K/s</text><text x="143" y="68">K/s</text></g>
    </svg>`;
  }

  private watermarks() {
    const spots: Pt[] = [];
    for (let r = 0; r < 6; r++) for (let c = 0; c < 9; c++) spots.push([Math.round(284.6 * c + 2), Math.round(215 + 219.4 * r)]);
    return html`<svg class="marks" viewBox="0 0 2560 1355" aria-hidden="true">
      ${spots.map(([x, y]) => svg`<text transform="translate(${x} ${y}) rotate(-46)" fill="#707070" fill-opacity="0.28">www.cfchi.com</text>`)}
    </svg>`;
  }

  render() {
    return html`<div class="app">
      ${this.titleBar()}
      <div class="toolbar">
        <button class="toggle" aria-label="侧栏"><svg viewBox="0 0 18 18"><rect x="1" y="1" width="16" height="16" rx="3" fill="none" stroke="#707070" stroke-width="2" /><rect x="10" y="4" width="4" height="10" fill="#707070" /></svg></button>
        <nav class="periods">${PERIODS.map((p) => html`<button class="period ${p === "日线" ? "on" : ""}">${p}</button>`)}</nav>
        <div class="actions">${ACTIONS.map((a) => html`<button class="action ${a === "画线" ? "on" : ""}">${a}</button>`)}</div>
      </div>
      <section>
        <div class="legend main-legend">
          <span class="code">300433</span><span>蓝思科技(日线.前复权)</span>${this.chevron()}
          <span class="name">大道至简主图2(85,85)</span>
          <chart-legend .items=${LEGEND_A}></chart-legend>
          <div class="corner">
            <div class="icons">
              <svg viewBox="0 0 18 18"><path d="M9 1l7 8l-7 8l-7 -8z" fill="none" stroke="#686868" /></svg>
              <svg viewBox="0 0 18 18"><rect x="1" y="1" width="16" height="15" rx="3" fill="none" stroke="#686868" stroke-width="2" /><rect x="4" y="4" width="4" height="9" fill="#686868" /></svg>
            </div>
            <div class="axis-head"></div>
          </div>
        </div>
        <price-chart></price-chart>
      </section>
      <section>
        <div class="legend sub-legend">
          ${this.chevron("first")}
          <span class="name">王炸</span>
          <chart-legend .items=${LEGEND_B}></chart-legend>
          <div class="corner"><div class="axis-head"></div></div>
        </div>
        <signal-chart></signal-chart>
      </section>
      <nav class="row tabs">
        ${TABS.map((t, i) => html`<button class="tab ${i < 2 ? "tight" : ""} ${t === "管理" ? "on" : ""}">${t}</button>`)}
        <div class="push"><button class="tab pm">+</button><button class="tab pm">-</button></div>
      </nav>
      <nav class="row links">
        ${LINKS.map(([t, c]) => html`<a href="#" class="tab ${c}">${t}</a>`)}
        <div class="push"><a href="#" class="tab wide">新用户福利专享</a><a href="#" class="tab wide gold">图文F10</a><button class="tab side gold">侧边栏《</button></div>
      </nav>
      <footer class="status ui">
        <svg class="box" viewBox="0 0 22 24"><rect x="2" y="1" width="18" height="22" rx="3" fill="#f0a828" /><rect x="6" y="6" width="10" height="12" fill="#f8e0a0" stroke="#d08810" /></svg>
        <ul class="quotes">
          ${QUOTES.map((q) => html`<li class="quote"><span>${q[0]}</span><span class=${q[5]}>${q[1]}</span><span class="num ${q[5]}">${q[2]}</span><span class="num ${q[5]}">${q[3]}</span><span class="num">${q[4]}</span></li>`)}
        </ul>
        <div class="meter"><svg viewBox="0 0 152 28" aria-hidden="true">
          <path d="M0 3h72v9h-72zM77 3h72v9h-72z" fill="#fafafa" />
          <path d="M21 3h14v9h-14zM98 3h14v9h-14z" fill="#f00000" /><path d="M35 3h10v9h-10zM115 3h10v9h-10z" fill="#108010" />
          <path d="M4 17h70M4 23h70M82 17h70M82 23h70" stroke="#d83030" stroke-width="4" stroke-dasharray="10 2" />
        </svg></div>
        <div class="feed"><span>高级行情</span><span>上海双线7</span></div>
        ${this.tray()}
      </footer>
      <draw-palette class="float"></draw-palette>
      ${this.gadget()}
      ${this.watermarks()}
    </div>`;
  }
}
